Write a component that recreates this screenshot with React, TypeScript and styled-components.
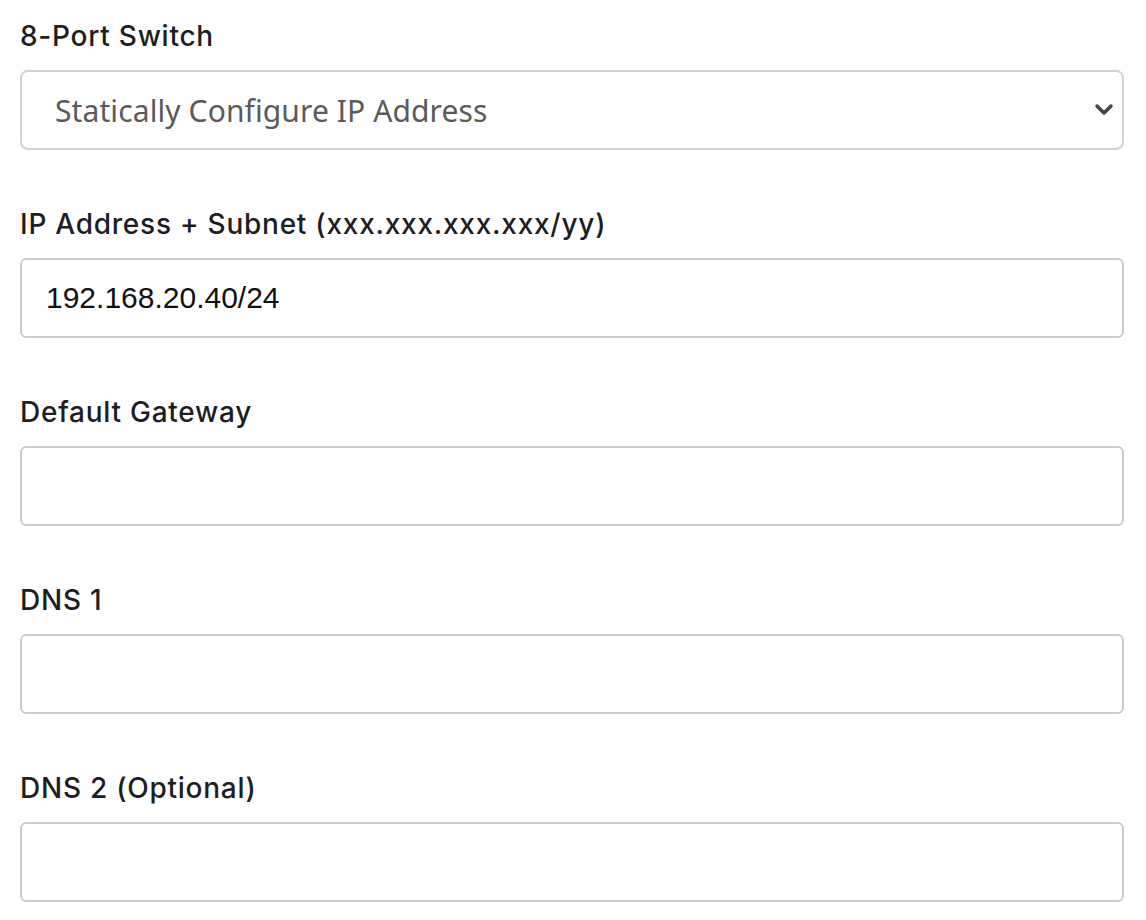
import React from "react";
import styled, { createGlobalStyle } from "styled-components";

const Global = createGlobalStyle`
  html, body { margin: 0; padding: 0; background: #fff; }
  body { font-family: Inter, "Noto Sans", sans-serif; }
  * { box-sizing: border-box; }
`;

const Form = styled.form`
  display: flex;
  flex-direction: column;
  gap: 56px;
  padding: 18px 22px 0 20px;
`;

const Field = styled.div`
  display: flex;
  flex-direction: column;
  gap: 16px;
`;

const Label = styled.label`
  font-family: Inter, "Noto Sans", sans-serif;
  font-size: 28px;
  font-weight: 500;
  letter-spacing: 0.75px;
  line-height: 36px;
  color: #1d1e23;
`;

const SelectWrap = styled.div`
  position: relative;
  height: 80px;
`;

const Select = styled.select`
  appearance: none;
  width: 100%;
  height: 100%;
  border: 2px solid #d2d2d2;
  border-radius: 8px;
  background: #fff;
  padding: 0 60px 0 33px;
  font-family: "Noto Sans", sans-serif;
  font-size: 30px;
  letter-spacing: 0.1px;
  color: #5a5a5a;
  outline: none;
`;

const Chevron = styled.svg`
  position: absolute;
  right: 10px;
  top: 50%;
  transform: translateY(-50%);
  pointer-events: none;
`;

const Input = styled.input`
  width: 100%;
  height: 80px;
  border: 2px solid #c9cdd4;
  border-radius: 6px;
  background: #fff;
  padding: 0 24px;
  font-family: "Liberation Sans", Arial, sans-serif;
  font-size: 30px;
  color: #111;
  outline: none;
`;

const fields = [
  { label: "IP Address + Subnet (xxx.xxx.xxx.xxx/yy)", value: "192.168.20.40/24" },
  { label: "Default Gateway", value: "" },
  { label: "DNS 1", value: "" },
  { label: "DNS 2 (Optional)", value: "" },
];

export default function App() {
  return (
    <>
      <Global />
      <Form>
        <Field>
          <Label>8-Port Switch</Label>
          <SelectWrap>
            <Select defaultValue="static">
              <option value="static">Statically Configure IP Address</option>
              <option value="dhcp">Use DHCP</option>
            </Select>
            <Chevron width="20" height="14" viewBox="0 0 20 14">
              <path d="M3 3 L10 10 L17 3" fill="none" stroke="#444" strokeWidth="3.5" strokeLinecap="round" strokeLinejoin="round" />
            </Chevron>
          </SelectWrap>
        </Field>
        {fields.map((f) => (
          <Field key={f.label}>
            <Label>{f.label}</Label>
            <Input defaultValue={f.value} />
          </Field>
        ))}
      </Form>
    </>
  );
}
